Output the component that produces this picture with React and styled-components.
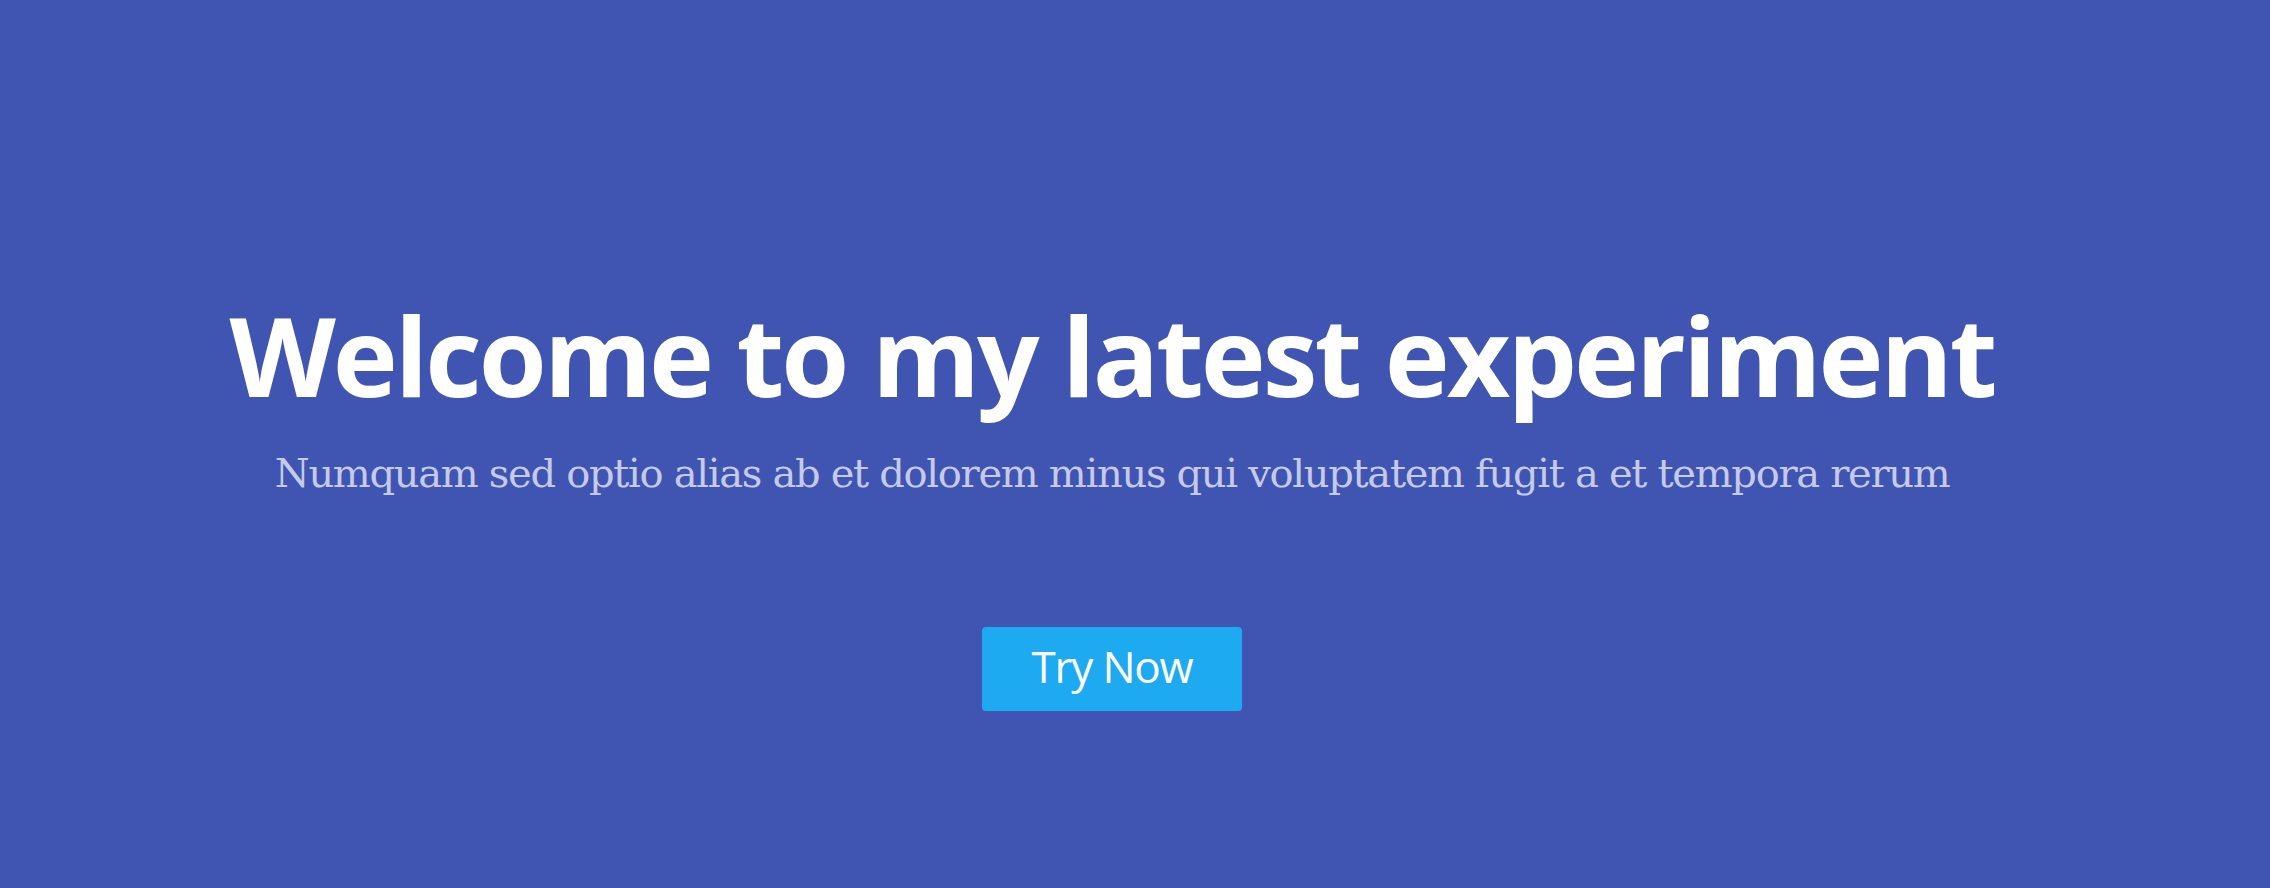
import React from 'react';
import styled, { createGlobalStyle } from 'styled-components';

const GlobalStyle = createGlobalStyle`
  html, body {
    margin: 0;
    padding: 0;
    background: #4055b2;
  }
`;

const Hero = styled.section`
  height: 888px;
  box-sizing: border-box;
  padding: 288px 46px 0 0;
  background: #4055b2;
  display: flex;
  flex-direction: column;
  align-items: center;
  text-align: center;
`;

const Title = styled.h1`
  margin: 0;
  font-family: "Open Sans", sans-serif;
  font-weight: 700;
  font-size: 110px;
  line-height: 132px;
  letter-spacing: -3px;
  color: #ffffff;
  white-space: nowrap;
`;

const Subtitle = styled.p`
  margin: 29px 0 0;
  font-family: "DejaVu Serif", "Liberation Serif", serif;
  font-size: 40px;
  line-height: 48px;
  letter-spacing: -1.3px;
  color: #c5cae9;
  white-space: nowrap;
`;

const TryButton = styled.button`
  margin-top: 130px;
  width: 260px;
  height: 84px;
  padding: 0 0 6px;
  box-sizing: border-box;
  border: none;
  border-radius: 4px;
  background: #1eaaf1;
  color: #ffffff;
  font-family: "Open Sans", sans-serif;
  font-size: 44px;
  line-height: 78px;
  letter-spacing: -1.2px;
  cursor: pointer;
`;

export default function App() {
  return (
    <>
      <GlobalStyle />
      <Hero>
        <Title>Welcome to my latest experiment</Title>
        <Subtitle>
          Numquam sed optio alias ab et dolorem minus qui voluptatem fugit a et tempora rerum
        </Subtitle>
        <TryButton>Try Now</TryButton>
      </Hero>
    </>
  );
}
